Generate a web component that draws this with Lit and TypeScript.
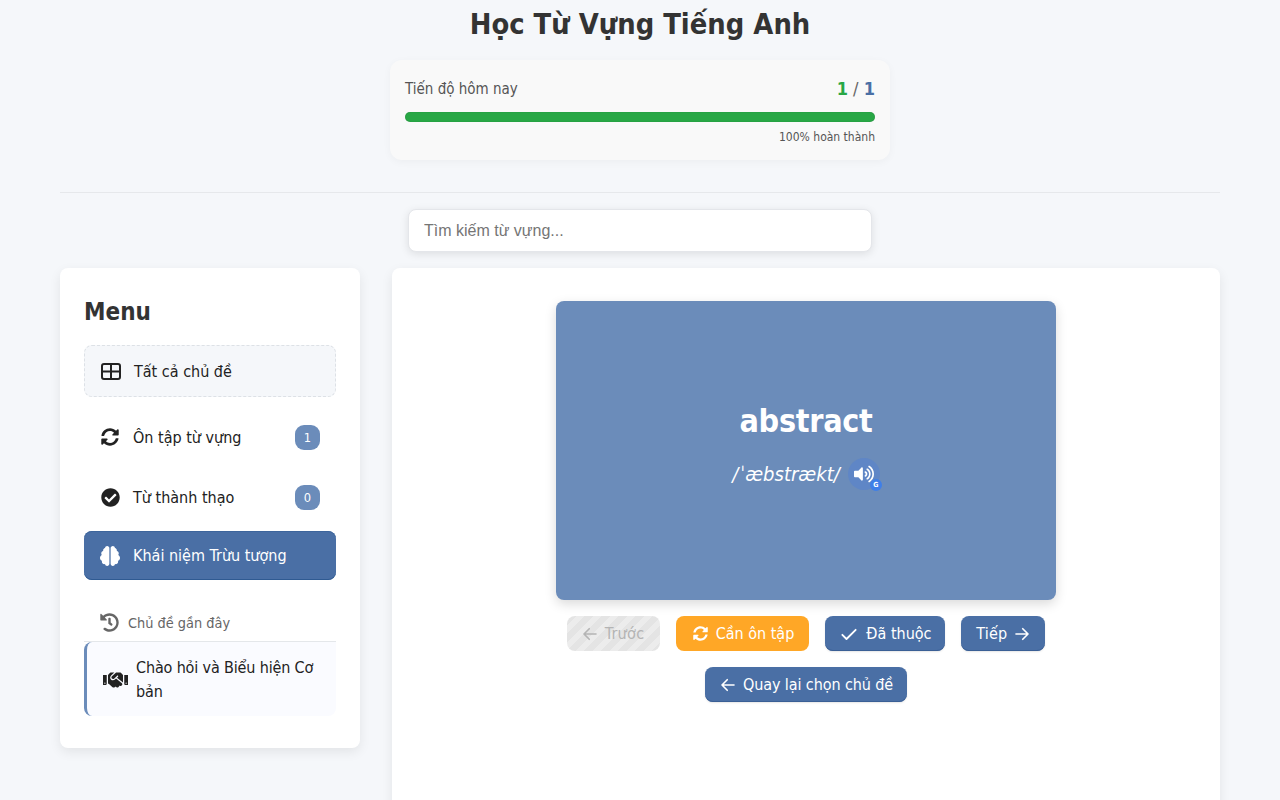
import { LitElement, html, css, svg } from 'lit';
import { customElement } from 'lit/decorators.js';

const SYNC = 'M370.72 133.28C339.458 104.008 298.888 87.962 255.848 88c-77.458.068-144.328 53.178-162.791 126.85-1.344 5.363-6.122 9.15-11.651 9.15H24.103c-7.498 0-13.194-6.807-11.807-14.176C33.933 94.924 134.813 8 256 8c66.448 0 126.791 26.136 171.315 68.685L463.03 40.97C478.149 25.851 504 36.559 504 57.941V192c0 13.255-10.745 24-24 24H345.941c-21.382 0-32.09-25.851-16.971-40.971l41.75-41.749zM32 296h134.059c21.382 0 32.09 25.851 16.971 40.971l-41.75 41.75c31.262 29.273 71.835 45.319 114.876 45.28 77.418-.07 144.315-53.144 162.787-126.849 1.344-5.363 6.122-9.15 11.651-9.15h57.304c7.498 0 13.194 6.807 11.807 14.176C478.067 417.076 377.187 504 256 504c-66.448 0-126.791-26.136-171.315-68.685L48.97 471.03C33.851 486.149 8 475.441 8 454.059V320c0-13.255 10.745-24 24-24z';
const CHECK_CIRCLE = 'M504 256c0 136.967-111.033 248-248 248S8 392.967 8 256 119.033 8 256 8s248 111.033 248 248zM227.314 387.314l184-184c6.248-6.248 6.248-16.379 0-22.627l-22.627-22.627c-6.248-6.249-16.379-6.249-22.628 0L216 308.118l-70.059-70.059c-6.248-6.248-16.379-6.248-22.628 0l-22.627 22.627c-6.248 6.248-6.248 16.379 0 22.627l104 104c6.249 6.249 16.379 6.249 22.628.001z';
const HISTORY = 'M504 255.531c.253 136.64-111.18 248.372-247.82 248.468-59.015.042-113.223-20.53-155.822-54.911-11.077-8.94-11.905-25.541-1.839-35.607l11.267-11.267c8.609-8.609 22.353-9.551 31.891-1.984C173.062 425.135 212.781 440 256 440c101.705 0 184-82.311 184-184 0-101.705-82.311-184-184-184-48.814 0-93.149 18.969-126.068 49.932l50.754 50.754c10.08 10.08 2.941 27.314-11.313 27.314H24c-8.837 0-16-7.163-16-16V38.627c0-14.254 17.234-21.393 27.314-11.314l49.372 49.372C129.209 34.136 189.552 8 256 8c136.81 0 247.747 110.78 248 247.531zm-180.912 78.784l9.823-12.63c8.138-10.463 6.253-25.542-4.21-33.679L288 256.349V152c0-13.255-10.745-24-24-24h-16c-13.255 0-24 10.745-24 24v135.651l65.409 50.874c10.463 8.137 25.541 6.253 33.679-4.21z';
const VOLUME = 'M215.03 71.05L126.06 160H24c-13.26 0-24 10.74-24 24v144c0 13.25 10.74 24 24 24h102.06l88.97 88.95c15.03 15.03 40.97 4.47 40.97-16.97V88.02c0-21.46-25.96-32-40.97-16.97zm233.32-51.08c-11.17-7.33-26.18-4.24-33.51 6.95-7.34 11.17-4.22 26.18 6.95 33.51 66.27 43.49 105.82 116.6 105.82 195.58 0 78.98-39.55 152.09-105.82 195.58-11.17 7.32-14.29 22.34-6.95 33.5 7.04 10.71 21.93 14.56 33.51 6.95C528.27 439.58 576 351.33 576 256S528.27 72.43 448.35 19.97zM480 256c0-63.53-32.06-121.94-85.77-156.24-11.19-7.14-26.03-3.82-33.12 7.46s-3.78 26.21 7.41 33.36C408.27 165.97 432 209.11 432 256s-23.73 90.03-63.48 115.42c-11.19 7.14-14.5 22.07-7.41 33.36 6.51 10.36 21.12 15.14 33.12 7.46C447.94 377.94 480 319.54 480 256zm-141.77-76.87c-11.58-6.33-26.19-2.16-32.61 9.45-6.39 11.61-2.16 26.2 9.45 32.61C327.98 228.28 336 241.63 336 256c0 14.38-8.02 27.72-20.92 34.81-11.61 6.41-15.84 21-9.45 32.61 6.43 11.66 21.05 15.8 32.61 9.45 28.23-15.55 45.77-45 45.77-76.88s-17.54-61.32-45.78-76.86z';
const BRAIN = 'M184 0c30.9 0 56 25.1 56 56V456c0 30.9-25.1 56-56 56c-28.9 0-52.7-21.9-55.7-50.1c-5.2 1.4-10.7 2.1-16.3 2.1c-35.3 0-64-28.7-64-64c0-7.4 1.3-14.6 3.6-21.2C21.4 367.4 0 338.2 0 304c0-31.9 18.7-59.5 45.8-72.3C37.1 220.8 32 207 32 192c0-30.7 21.6-56.3 50.4-62.6C80.8 123.9 80 118 80 112c0-29.9 20.6-55.1 48.3-62.1C131.3 21.9 155.1 0 184 0zM328 0c28.9 0 52.6 21.9 55.7 49.9c27.8 7 48.3 32.1 48.3 62.1c0 6-.8 11.9-2.4 17.4c28.8 6.2 50.4 31.9 50.4 62.6c0 15-5.1 28.8-13.8 39.7C493.3 244.5 512 272.1 512 304c0 34.2-21.4 63.4-51.6 74.8c2.3 6.6 3.6 13.8 3.6 21.2c0 35.3-28.7 64-64 64c-5.6 0-11.1-.7-16.3-2.1c-3 28.2-26.8 50.1-55.7 50.1c-30.9 0-56-25.1-56-56V56c0-30.9 25.1-56 56-56z';
const HANDSHAKE = 'M434.7 64h-85.9c-8 0-15.7 3-21.6 8.4l-98.3 90c-.1.1-.2.3-.3.4-16.6 15.6-16.3 40.5-2.1 56 12.7 13.9 39.4 17.6 56.1 2.7.1-.1.3-.1.4-.2l79.9-73.2c6.5-5.9 16.7-5.5 22.6 1 6 6.5 5.5 16.6-1 22.6l-26.1 23.9L504 313.8c2.9 2.4 5.5 5 7.9 7.7V128l-54.6-54.6c-5.9-6-14.1-9.4-22.6-9.4zM544 128.2v223.9c0 17.7 14.3 32 32 32h64V128.2h-96zm48 223.9c-8.8 0-16-7.2-16-16s7.2-16 16-16 16 7.2 16 16-7.2 16-16 16zM0 384h64c17.7 0 32-14.3 32-32V128.2H0V384zm48-63.9c8.8 0 16 7.2 16 16s-7.2 16-16 16-16-7.2-16-16c0-8.9 7.2-16 16-16zm435.9 18.6L334.6 217.5l-30 27.5c-29.7 27.1-75.2 24.5-101.7-4.4-26.9-29.4-24.8-74.9 4.4-101.7L289.1 64h-83.8c-8.5 0-16.6 3.4-22.6 9.4L128 128v223.9h18.3l90.5 81.9c27.4 22.3 67.7 18.1 90-9.3l.2-.2 17.9 15.5c15.9 13 39.4 10.5 52.3-5.4l31.4-38.6 5.4 4.4c13.7 11.1 33.9 9.1 45-4.7l9.5-11.7c11.2-13.8 9.1-33.9-4.6-45.1z';

function solid(d: string, w: number, h: number, vb = '0 0 512 512', cls = '') {
  return html`<svg class="ico ${cls}" width=${w} height=${h} viewBox=${vb} fill="currentColor">${svg`<path d=${d}></path>`}</svg>`;
}

function line(d: string, size: number, cls = '') {
  return html`<svg class="ico ${cls}" width=${size} height=${size} viewBox="0 0 24 24" fill="none" stroke="currentColor" stroke-width="2.2" stroke-linecap="round" stroke-linejoin="round">${svg`<path d=${d}></path>`}</svg>`;
}

const ARROW_LEFT = 'M20 12H4M11 5l-7 7 7 7';
const ARROW_RIGHT = 'M4 12h16M13 5l7 7-7 7';
const CHECK = 'M4 13l5 5L20 7';

const gridIcon = html`<svg class="ico" width="20" height="17" viewBox="0 0 20 17" fill="none" stroke="currentColor" stroke-width="2">${svg`<rect x="1" y="1" width="18" height="15" rx="2"></rect><path d="M1 8.5h18M10 1v15"></path>`}</svg>`;

@customElement('app-root')
export class AppRoot extends LitElement {
  static styles = css`
    :host {
      display: block;
      height: 800px;
      overflow: hidden;
      background: #f5f7fa;
      color: #333;
      font-family: "DejaVu Sans Condensed", "DejaVu Sans", sans-serif;
    }
    .ico { flex: none; display: block; }
    .page { padding: 0 60px; }
    h1 {
      margin: 0;
      padding-top: 6px;
      height: 60px;
      box-sizing: border-box;
      text-align: center;
      font-size: 28.8px;
      line-height: 36px;
      font-weight: 700;
    }
    .progress {
      box-sizing: border-box;
      width: 500px;
      height: 100px;
      margin: 0 auto;
      padding: 15px;
      background: #f9f9f9;
      border-radius: 12px;
      box-shadow: 0 2px 8px rgba(0, 0, 0, 0.04);
    }
    .progress-head {
      display: flex;
      justify-content: space-between;
      align-items: center;
      height: 27px;
      font-size: 15px;
      color: #555;
    }
    .count { font-size: 18px; color: #666; }
    .count b:first-child { color: #28a745; }
    .count b:last-child { color: #4a6fa5; }
    .track {
      height: 10px;
      margin-top: 10px;
      border-radius: 5px;
      background: #28a745;
      box-shadow: inset 0 0 1px rgba(0, 0, 0, 0.3);
    }
    .pct {
      margin-top: 7px;
      text-align: right;
      font-size: 12px;
      line-height: 16px;
      color: #555;
    }
    .rule {
      height: 1px;
      margin-top: 32px;
      background: #e6e8eb;
    }
    .search {
      box-sizing: border-box;
      display: block;
      width: 464px;
      height: 43px;
      margin: 16px auto;
      padding: 0 15px;
      border: 1px solid #e4e6ea;
      border-radius: 8px;
      background: #fff;
      box-shadow: 0 2px 8px rgba(0, 0, 0, 0.1);
      font-family: "Liberation Sans", Arial, sans-serif;
      font-size: 16px;
      outline: none;
    }
    .search::placeholder { color: #757575; opacity: 1; }
    .layout {
      display: flex;
      align-items: flex-start;
      gap: 32px;
    }
    .side {
      box-sizing: border-box;
      flex: none;
      width: 300px;
      height: 480px;
      padding: 24px;
      background: #fff;
      border-radius: 8px;
      box-shadow: 0 4px 12px rgba(0, 0, 0, 0.08);
    }
    h2 {
      margin: 0 0 17px;
      font-size: 24px;
      line-height: 40px;
      height: 36px;
      font-weight: 700;
    }
    .item {
      box-sizing: border-box;
      display: flex;
      align-items: center;
      height: 50px;
      padding: 0 16px;
      margin-top: 10px;
      border-radius: 8px;
      font-size: 16px;
      color: #222;
    }
    .item > .ico { margin-right: 13px; }
    .item > .ico.sync-ico { margin: 0 14px 0 1px; }
    .item > .ico.done-ico { margin: 0 13px 0 1px; }
    .item > .ico.brain-ico { margin: 0 13px 0 0; }
    .item > span:first-of-type { flex: 1; }
    .all {
      height: 52px;
      margin-top: 0;
      margin-bottom: 15px;
      background: #f5f7fa;
      border: 1px dashed #dde1e6;
    }
    .badge {
      width: 25px;
      height: 25px;
      border-radius: 9px;
      background: #6b8cba;
      color: #fff;
      font-size: 12.8px;
      line-height: 25px;
      text-align: center;
    }
    .active {
      height: 49px;
      margin-top: 9px;
      background: #4a6fa5;
      color: #fff;
      box-shadow: inset 0 -1px 0 #2f5a92, inset 0 1px 0 #3d659c;
    }
    .recent-head {
      box-sizing: border-box;
      display: flex;
      align-items: center;
      gap: 9px;
      height: 42px;
      margin-top: 20px;
      padding: 12px 16px 8px;
      font-size: 14.4px;
      color: #666;
      border-bottom: 1px solid #e4e7ea;
    }
    .recent {
      box-sizing: border-box;
      display: flex;
      align-items: center;
      height: 74px;
      padding: 2px 16px 0 16px;
      gap: 8px;
      background: #fafbff;
      border-left: 3px solid #6b8cba;
      border-radius: 8px 0 8px 8px;
      font-size: 16px;
      line-height: 24px;
      letter-spacing: -0.15px;
      color: #222;
    }
    .main {
      box-sizing: border-box;
      flex: 1;
      height: 640px;
      padding-top: 33px;
      background: #fff;
      border-radius: 8px;
      box-shadow: 0 4px 12px rgba(0, 0, 0, 0.08);
    }
    .card {
      display: flex;
      flex-direction: column;
      align-items: center;
      justify-content: center;
      width: 500px;
      height: 299px;
      margin: 0 auto;
      padding-bottom: 12px;
      box-sizing: border-box;
      background: #6b8cba;
      border-radius: 8px;
      color: #fff;
      box-shadow: 0 4px 12px rgba(0, 0, 0, 0.15);
    }
    .word {
      font-size: 32px;
      line-height: 44px;
      font-weight: 700;
      letter-spacing: -0.3px;
    }
    .phon {
      display: flex;
      align-items: center;
      gap: 8px;
      margin-top: 15px;
      font-size: 20px;
      font-style: italic;
    }
    .slash { margin-right: 2px; }
    .speak {
      position: relative;
      display: flex;
      align-items: center;
      justify-content: center;
      width: 32px;
      height: 32px;
      border-radius: 50%;
      background: #5f86c6;
    }
    .g {
      position: absolute;
      right: -2px;
      bottom: -1px;
      width: 12px;
      height: 12px;
      border-radius: 50%;
      background: #3f7fe8;
      font-size: 7px;
      font-style: normal;
      font-weight: 700;
      line-height: 12px;
      text-align: center;
    }
    .actions {
      display: flex;
      justify-content: center;
      gap: 16px;
      margin-top: 16px;
    }
    .btn {
      box-sizing: border-box;
      display: flex;
      align-items: center;
      gap: 7px;
      height: 35px;
      padding: 0 15px;
      border-radius: 8px;
      background: #4a6fa5;
      color: #fff;
      font-size: 16px;
      white-space: nowrap;
      box-shadow: inset 0 -1px 0 #3a5f95, 0 1px 2px rgba(0, 0, 0, 0.1);
    }
    .btn .arrow { margin: 0 -1px; }
    .btn .sync-small { margin-left: 2px; margin-right: 1px; }
    .btn .tick { margin-left: -1px; }
    .btn.warn { background: #ffa726; box-shadow: none; }
    .btn.off {
      width: 93px;
      color: #b4b4b4;
      box-shadow: none;
      letter-spacing: 0.3px;
      background: repeating-linear-gradient(-45deg, #e4e4e4 0 6px, #ececec 6px 12px);
    }
    .btn.learned { width: 120px; }
    .btn.next { width: 84px; letter-spacing: 0.2px; }
    .btn.back { width: 202px; letter-spacing: -0.1px; }
  `;

  render() {
    return html`
      <div class="page">
        <h1>Học Từ Vựng Tiếng Anh</h1>
        <section class="progress">
          <div class="progress-head">
            <span>Tiến độ hôm nay</span>
            <span class="count"><b>1</b> / <b>1</b></span>
          </div>
          <div class="track"></div>
          <div class="pct">100% hoàn thành</div>
        </section>
        <div class="rule"></div>
        <input class="search" placeholder="Tìm kiếm từ vựng..." />
        <div class="layout">
          <aside class="side">
            <h2>Menu</h2>
            <div class="item all">${gridIcon}<span>Tất cả chủ đề</span></div>
            <div class="item">${solid(SYNC, 18, 18, '0 0 512 512', 'sync-ico')}<span>Ôn tập từ vựng</span><span class="badge">1</span></div>
            <div class="item">${solid(CHECK_CIRCLE, 19, 19, '0 0 512 512', 'done-ico')}<span>Từ thành thạo</span><span class="badge">0</span></div>
            <div class="item active">${solid(BRAIN, 20, 20, '0 0 512 512', 'brain-ico')}<span>Khái niệm Trừu tượng</span></div>
            <div class="recent-head">${solid(HISTORY, 19, 19)}<span>Chủ đề gần đây</span></div>
            <div class="recent">${solid(HANDSHAKE, 25, 20, '0 0 640 512')}<span>Chào hỏi và Biểu hiện Cơ bản</span></div>
          </aside>
          <main class="main">
            <div class="card">
              <div class="word">abstract</div>
              <div class="phon">
                <span><span class="slash">/</span>ˈæbstrækt/</span>
                <span class="speak">${solid(VOLUME, 20, 18, '0 0 576 512')}<span class="g">G</span></span>
              </div>
            </div>
            <div class="actions">
              <div class="btn off">${line(ARROW_LEFT, 18, 'arrow')}<span>Trước</span></div>
              <div class="btn warn">${solid(SYNC, 15, 15, '0 0 512 512', 'sync-small')}<span>Cần ôn tập</span></div>
              <div class="btn learned">${line(CHECK, 20, 'tick')}<span>Đã thuộc</span></div>
              <div class="btn next"><span>Tiếp</span>${line(ARROW_RIGHT, 18, 'arrow')}</div>
            </div>
            <div class="actions">
              <div class="btn back">${line(ARROW_LEFT, 18, 'arrow')}<span>Quay lại chọn chủ đề</span></div>
            </div>
          </main>
        </div>
      </div>
    `;
  }
}
